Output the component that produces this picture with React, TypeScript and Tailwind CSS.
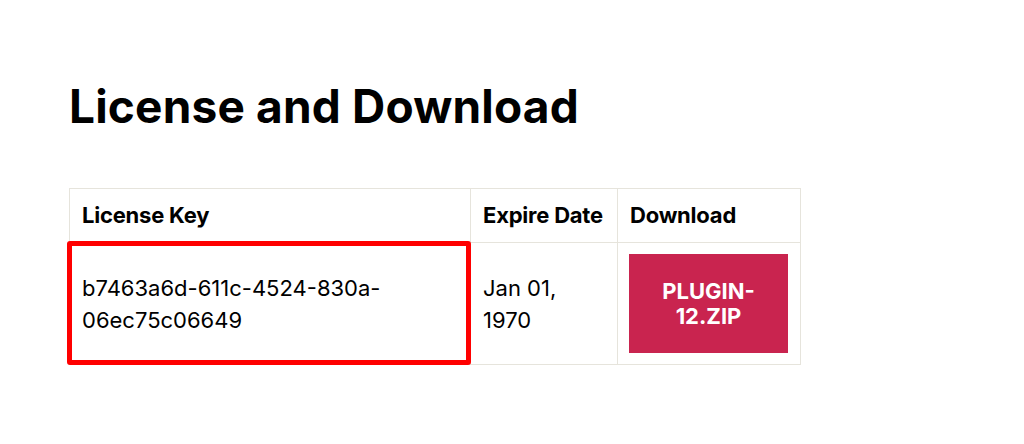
export default function App() {
  return (
    <div className="w-[1024px] h-[444px] bg-white font-['Inter',sans-serif] text-black overflow-hidden">
      <div className="pl-[69px] pt-[78px]">
        <h1 className="text-[46px] font-bold tracking-[0.004em] leading-[56px] m-0">License and Download</h1>
        <table className="mt-[54px] table-fixed border-collapse border border-[#e6e4dc] text-[22px] leading-[29px]">
          <thead>
            <tr>
              <th className="w-[401px] whitespace-nowrap border border-[#e6e4dc] px-3 py-3 text-left font-bold tracking-[-0.01em] align-middle">License Key</th>
              <th className="w-[147px] whitespace-nowrap border border-[#e6e4dc] pl-3 pr-0 py-3 text-left font-bold tracking-[-0.01em] align-middle">Expire Date</th>
              <th className="w-[182px] whitespace-nowrap border border-[#e6e4dc] px-3 py-3 text-left font-bold tracking-[-0.01em] align-middle">Download</th>
            </tr>
          </thead>
          <tbody>
            <tr>
              <td className="relative border border-[#e6e4dc] px-3 py-3 align-middle leading-[32px]">
                b7463a6d-611c-4524-830a-
                <br />
                06ec75c06649
                <div className="absolute left-[-3px] top-[-2px] right-[-1px] bottom-[-1px] border-[5px] border-[#ff0000] rounded-[3px]"></div>
              </td>
              <td className="border border-[#e6e4dc] px-3 py-3 align-middle leading-[32px]">
                Jan 01,
                <br />
                1970
              </td>
              <td className="border border-[#e6e4dc] pl-[11px] pr-3 py-[11px] align-middle">
                <a className="flex h-[99px] w-[159px] items-center justify-center bg-[#c9244f] text-center text-[22px] font-bold leading-[25px] text-white">
                  PLUGIN-
                  <br />
                  12.ZIP
                </a>
              </td>
            </tr>
          </tbody>
        </table>
      </div>
    </div>
  );
}
